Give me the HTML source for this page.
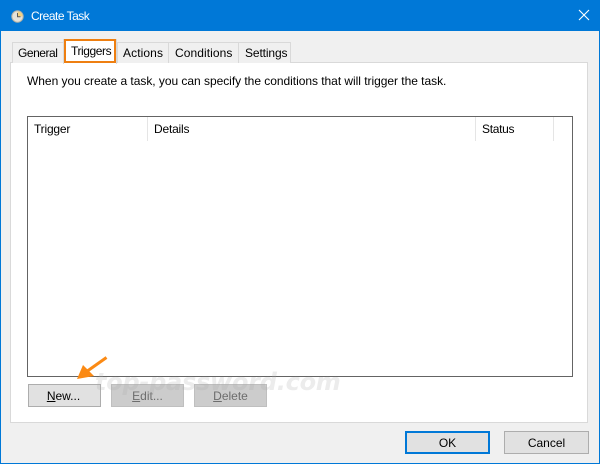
<!DOCTYPE html>
<html><head><meta charset="utf-8">
<style>
html,body{margin:0;padding:0;width:600px;height:464px;overflow:hidden;background:#f0f0f0}
body{position:relative;font-family:"Liberation Sans",sans-serif;font-size:12px;color:#000}
.a{position:absolute;box-sizing:border-box}
.t{position:absolute;white-space:nowrap;line-height:16px;font-size:12px}
.tab{position:absolute;box-sizing:border-box;border:1px solid #d9d9d9;border-bottom:none;background:#f0f0f0;top:42px;height:21px}
.btn{position:absolute;box-sizing:border-box;top:384px;height:23px;width:73px;text-align:center;line-height:22px;font-size:12px;border:1px solid #adadad;background:#e1e1e1}
.dis{background:#cccccc;border-color:#bfbfbf;color:#6d6d6d}
</style></head><body>
<div class="a" style="left:0;top:0;width:600px;height:464px;border:1px solid #0078d7;border-top:none"></div>
<div class="a" style="left:0;top:0;width:600px;height:31px;background:#0078d7"></div>
<svg class="a" style="left:11px;top:10px" width="13" height="13" viewBox="0 0 13 13">
<circle cx="6.5" cy="6.5" r="5.7" fill="#e6e3da" stroke="#b5b1a3" stroke-width="1"/>
<path d="M6.5 6.5V1.5A5 5 0 0 1 11.5 6.5Z" fill="#f5d27e"/>
<path d="M6.5 3V6.8H9.5" fill="none" stroke="#5a5a5a" stroke-width="1"/>
</svg>
<div class="t" style="left:31px;top:8px;color:#fff;letter-spacing:-.5px">Create Task</div>
<svg class="a" style="left:578px;top:9px" width="12" height="12" viewBox="0 0 12 12"><path d="M1 1L11 11M11 1L1 11" stroke="#fff" stroke-width="1.1" fill="none"/></svg>

<div class="a" style="left:10px;top:62px;width:578px;height:361px;background:#fff;border:1px solid #d9d9d9"></div>

<div class="tab" style="left:12px;width:52px"></div>
<div class="tab" style="left:117px;width:52px"></div>
<div class="tab" style="left:168px;width:71px"></div>
<div class="tab" style="left:238px;width:53px"></div>
<div class="a" style="left:63px;top:39px;width:54px;height:25px;background:#fff;border:1px solid #d9d9d9;border-bottom:none"></div>
<div class="a" style="left:64px;top:39px;width:52px;height:24px;border:2px solid #ee7f11"></div>
<div class="t" style="left:18px;top:45px;letter-spacing:-.47px">General</div>
<div class="t" style="left:71px;top:43px;letter-spacing:-.42px">Triggers</div>
<div class="t" style="left:123px;top:45px;letter-spacing:.1px">Actions</div>
<div class="t" style="left:175px;top:45px;letter-spacing:.08px">Conditions</div>
<div class="t" style="left:245px;top:45px;letter-spacing:-.12px">Settings</div>

<div class="t" style="left:27px;top:73px;letter-spacing:-.035px">When you create a task, you can specify the conditions that will trigger the task.</div>

<div class="a" style="left:27px;top:116px;width:546px;height:261px;border:1px solid #646464;background:#fff"></div>
<div class="a" style="left:147px;top:117px;width:1px;height:24px;background:#e5e5e5"></div>
<div class="a" style="left:475px;top:117px;width:1px;height:24px;background:#e5e5e5"></div>
<div class="a" style="left:553px;top:117px;width:1px;height:24px;background:#e5e5e5"></div>
<div class="t" style="left:34px;top:121px;letter-spacing:-.2px">Trigger</div>
<div class="t" style="left:154px;top:121px;letter-spacing:-.2px">Details</div>
<div class="t" style="left:482px;top:121px;letter-spacing:-.3px">Status</div>

<div class="btn" style="left:28px;padding-right:2px"><u>N</u>ew...</div>
<div class="btn dis" style="left:111px"><u>E</u>dit...</div>
<div class="btn dis" style="left:194px"><u>D</u>elete</div>

<div class="t" style="left:95px;top:365px;font-size:24px;line-height:34px;font-family:'DejaVu Sans',sans-serif;font-style:italic;font-weight:bold;color:rgba(170,170,170,.22);letter-spacing:-.25px">top-password.com</div>

<svg class="a" style="left:74px;top:352px" width="36" height="30" viewBox="0 0 36 30">
<path d="M32.5 5.5L12 20" stroke="#fb8a14" stroke-width="3" fill="none"/>
<path d="M3 27L9 13L20 24Z" fill="#fb8a14"/>
</svg>

<div class="btn" style="left:405px;top:431px;width:85px;border:2px solid #0078d7;line-height:20px">OK</div>
<div class="btn" style="left:504px;top:431px;width:85px;line-height:22px">Cancel</div>
</body></html>
